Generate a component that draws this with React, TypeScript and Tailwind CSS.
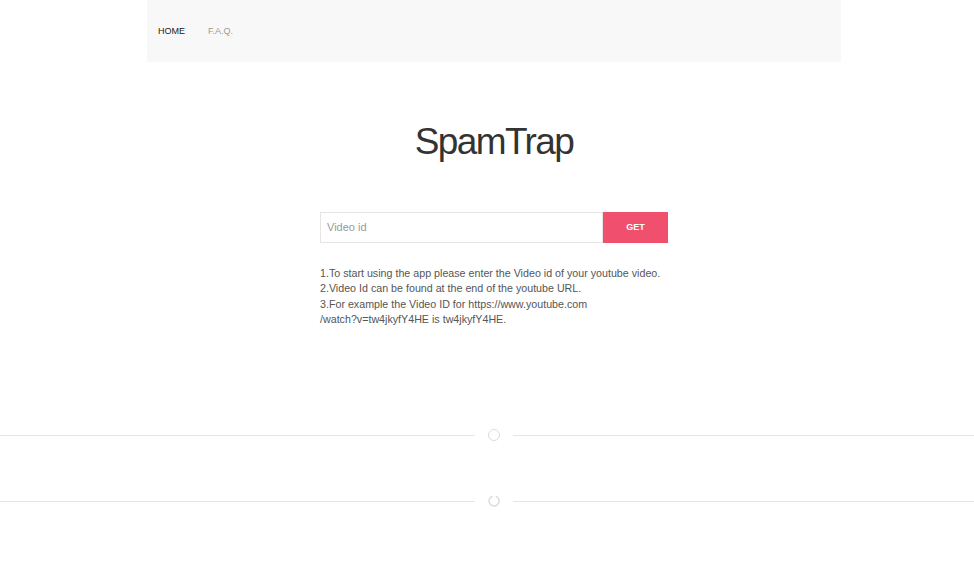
export default function App() {
  return (
    <div className="min-h-[562px] bg-white font-['Liberation_Sans',Arial,sans-serif] text-[#666]">
      <nav className="ml-[147px] w-[694px] h-[62px] bg-[#f8f8f8] flex items-center px-[11px] gap-[23px] text-[9px] pt-px">
        <a className="text-[#222] uppercase">Home</a>
        <a className="text-[#999] uppercase">F.A.Q.</a>
      </nav>

      <div className="ml-[320px] w-[348px]">
        <h1 className="mt-[56px] text-center text-[37px] leading-[48px] text-[#333] font-normal tracking-[-1.6px]">
          SpamTrap
        </h1>

        <div className="mt-[46px] flex h-[31px]">
          <input
            placeholder="Video id"
            className="flex-1 border border-[#e5e5e5] px-[6px] text-[11px] text-[#666] placeholder:text-[#999] outline-none"
          />
          <button className="w-[65px] bg-[#f0506e] text-white text-[9px] font-bold uppercase">
            Get
          </button>
        </div>

        <div className="mt-[23px] text-[10.7px] leading-[15.3px] text-[#555] whitespace-nowrap">
          <p>1.To start using the app please enter the Video id of your youtube video.</p>
          <p>2.Video Id can be found at the end of the youtube URL.</p>
          <p>
            3.For example the Video ID for https://www.youtube.com
            <br />
            /watch?v=tw4jkyfY4HE is tw4jkyfY4HE.
          </p>
        </div>
      </div>

      <div className="mt-[102px] flex items-center">
        <div className="w-[475px] h-px bg-[#e5e5e5]" />
        <div className="mx-[13px] w-[12px] h-[12px] rounded-full border-[1.5px] border-[#dcdcdc]" />
        <div className="flex-1 h-px bg-[#e5e5e5]" />
      </div>

      <div className="mt-[54px] flex items-center">
        <div className="w-[475px] h-px bg-[#e5e5e5]" />
        <svg className="mx-[13px]" width="12" height="12" viewBox="0 0 12 12">
          <path d="M7.8 1.3 A5 5 0 1 1 4.6 1.2" fill="none" stroke="#dcdcdc" strokeWidth="1.5" />
        </svg>
        <div className="flex-1 h-px bg-[#e5e5e5]" />
      </div>
    </div>
  );
}
